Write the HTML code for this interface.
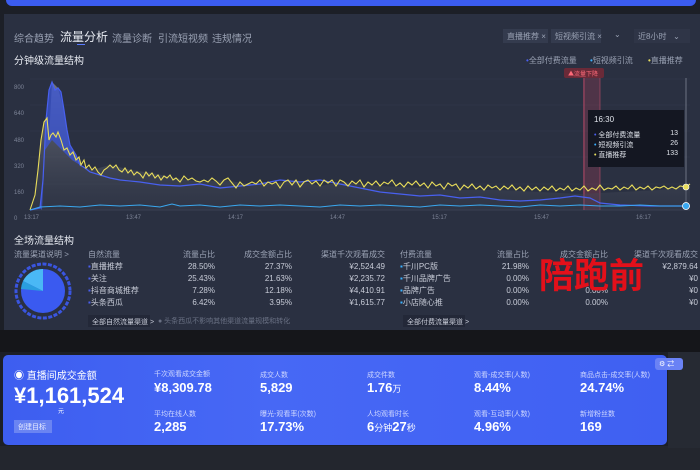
<!DOCTYPE html>
<html><head><meta charset="utf-8"><style>
*{margin:0;padding:0;box-sizing:border-box}
body{width:700px;height:470px;overflow:hidden;background:#1c1f27;font-family:"Liberation Sans","Noto Sans CJK SC",sans-serif;position:relative;color:#c8ccd8}
.a{position:absolute;white-space:nowrap}
.t{font-size:9px;color:#9aa2b4}
.w{color:#e8ebf2}
.r{text-align:right}
</style></head><body>
<div class="a" style="left:6px;top:-10px;width:690px;height:16px;background:#3b5cf0;border-radius:6px"></div>
<div class="a" style="left:4px;top:14px;width:696px;height:316px;background:#2a3041"></div>
<div class="a" style="left:0;top:330px;width:700px;height:22px;background:#15161a"></div>
<div class="a" style="left:0;top:446px;width:700px;height:24px;background:#23262e"></div>
<div class="a" style="left:668px;top:352px;width:32px;height:96px;background:#262a33"></div>

<div class="a t" style="left:14px;top:30px;font-size:10px">综合趋势</div>
<div class="a w" style="left:60px;top:28px;font-size:12px">流量分析</div>
<div class="a" style="left:77px;top:44px;width:8px;height:1px;background:#5b7cff"></div>
<div class="a t" style="left:112px;top:30px;font-size:10px">流量诊断</div>
<div class="a t" style="left:158px;top:30px;font-size:10px">引流短视频</div>
<div class="a t" style="left:212px;top:30px;font-size:10px">违规情况</div>

<div class="a t" style="left:503px;top:29px;height:14px;width:45px;background:#343b4e;font-size:8px;padding:2px 4px">直播推荐 ×</div>
<div class="a t" style="left:551px;top:29px;height:14px;width:50px;background:#343b4e;font-size:8px;padding:2px 4px">短视频引流 ×</div>
<div class="a t" style="left:614px;top:30px;font-size:8px">⌄</div>
<div class="a t" style="left:634px;top:29px;height:14px;width:56px;background:#2f3547;font-size:8px;padding:2px 4px">近8小时 &nbsp; ⌄</div>

<div class="a w" style="left:14px;top:52px;font-size:10px">分钟级流量结构</div>
<div class="a t" style="left:526px;top:55px;font-size:8px"><span style="color:#4a5ff0">•</span>全部付费流量</div>
<div class="a t" style="left:590px;top:55px;font-size:8px"><span style="color:#3ab0ff">•</span>短视频引流</div>
<div class="a t" style="left:648px;top:55px;font-size:8px"><span style="color:#e8e060">•</span>直播推荐</div>

<div class="a t" style="left:14px;top:75px;font-size:6px;line-height:26.3px;color:#7c8396">800<br>640<br>480<br>320<br>160<br>0</div>
<svg class="a" style="left:0;top:0" width="700" height="230">
<defs><linearGradient id="g" x1="0" y1="0" x2="0" y2="1"><stop offset="0" stop-color="#8a8c96" stop-opacity=".75"/><stop offset="1" stop-color="#3a4050" stop-opacity=".3"/></linearGradient></defs>
<g stroke="#343a4c" stroke-width=".5"><line x1="30" y1="79" x2="690" y2="79"/><line x1="30" y1="105" x2="690" y2="105"/><line x1="30" y1="131" x2="690" y2="131"/><line x1="30" y1="157" x2="690" y2="157"/><line x1="30" y1="184" x2="690" y2="184"/><line x1="30" y1="210" x2="690" y2="210" stroke="#4a5064"/></g>
<rect x="583" y="76" width="17" height="134" fill="#c04060" opacity=".25"/>
<line x1="584" y1="76" x2="584" y2="210" stroke="#d05070" stroke-width=".7"/>
<line x1="600" y1="76" x2="600" y2="210" stroke="#d05070" stroke-width=".5"/>
<line x1="686" y1="78" x2="686" y2="210" stroke="#8a90a0" stroke-width=".7"/>
<polygon fill="url(#g)" points="30,210 35,195 38,170 41,140 44,122 47,118 49,140 52,82 58,88 64,110 70,145 76,155 81,165 92,170 110,165 131,170 152,173 176,178 200,182 224,180 248,184 272,184 296,180 320,186 344,182 380,186 420,188 460,190 500,190 540,192 580,194 620,192 660,190 690,186 690,210"/>
<polygon fill="#3b55d8" fill-opacity=".75" points="43,180 46,120 49,90 52,82 55,90 58,88 61,92 64,110 67,130 70,145 73,150 76,155 80,165 72,160 62,150 52,140 45,150 42,210 40,208"/>
<polyline fill="none" stroke="#4860f0" stroke-width="1.2" points="30,210 40,208 43,180 46,120 49,90 52,82 55,90 58,88 61,92 64,110 67,130 70,145 73,150 76,155 80,165 85,168 90,172 100,175 110,178 120,180 140,182 160,185 180,186 200,184 220,188 240,186 260,184 280,180 300,182 320,180 340,184 360,188 380,192 400,194 420,196 440,195 460,198 480,197 500,200 520,201 540,200 560,198 575,196 590,198 600,203 620,205 650,206 690,206"/>
<polyline fill="none" stroke="#e8dc5a" stroke-width="1.1" points="30,210 35,195 38,170 41,140 44,122 47,118 49,140 51,135 53,133 56,137 58,132 61,140 64,150 67,148 70,155 73,152 76,160 79,157 81,165 84,160 86,168 89,165 92,170 95,167 98,172 101,175 104,170 107,168 110,165 113,168 116,165 119,170 122,172 125,168 128,173 131,170 134,175 137,172 140,174 143,178 146,172 149,176 152,173 155,178 158,175 161,180 164,176 167,178 170,175 173,180 176,178 180,182 184,176 188,180 192,178 196,181 200,182 204,180 208,182 212,178 216,181 220,185 224,180 228,178 232,183 236,188 240,182 244,186 248,184 252,182 256,184 260,180 264,186 268,182 272,184 276,182 280,188 284,182 288,180 292,185 296,180 300,187 304,182 308,180 312,184 316,181 320,186 324,180 328,183 332,180 336,186 340,180 344,182 348,186 352,181 356,184 360,180 364,187 368,182 372,185 376,181 380,186 384,182 388,184 392,180 396,186 400,183 404,187 408,182 412,185 416,181 420,186 424,183 428,188 432,182 436,186 440,184 444,189 448,183 452,186 456,184 460,190 464,185 468,188 472,184 476,189 480,186 484,190 488,185 492,188 496,186 500,190 504,186 508,189 512,185 516,190 520,187 524,191 528,186 532,190 536,187 540,191 544,187 548,190 552,186 556,191 560,188 564,190 568,186 572,191 576,188 580,190 584,186 588,191 592,188 596,190 600,185 604,190 608,188 612,189 616,186 620,190 624,187 628,189 632,185 636,190 640,187 644,189 648,186 652,190 656,187 660,188 664,186 668,189 672,187 676,189 680,186 686,187 690,184"/>
<polyline fill="none" stroke="#3aa8f0" stroke-width="1" points="30,210 40,207 60,206 80,207 100,205 120,206 140,205 160,207 172,204 180,206 200,205 220,207 240,205 260,206 280,205 300,206 320,207 340,205 360,206 380,205 400,206 420,207 440,205 460,206 480,205 500,206 520,207 540,205 560,206 580,205 600,206 620,206 640,205 660,206 686,206 690,206"/>
<circle cx="686" cy="187" r="3" fill="#e8dc5a" stroke="#fff" stroke-width=".6"/>
<circle cx="686" cy="206" r="3.5" fill="#3aa8f0" stroke="#fff" stroke-width=".8"/>
<g fill="#7c8396" font-size="6" font-family="Liberation Sans"><text x="24" y="219">13:17</text><text x="126" y="219">13:47</text><text x="228" y="219">14:17</text><text x="330" y="219">14:47</text><text x="432" y="219">15:17</text><text x="534" y="219">15:47</text><text x="636" y="219">16:17</text></g>
<rect x="564" y="68" width="40" height="10" rx="2" fill="#6a2a38"/>
<text x="568" y="76" font-size="6" fill="#ff6b7a" font-family="Noto Sans CJK SC">▲流量下降</text>
</svg>
<div class="a" style="left:588px;top:110px;width:96px;height:57px;background:#141722;font-size:7px;color:#dfe3ea;padding:5px 6px">
<div style="font-size:8px;margin-bottom:6px">16:30</div>
<div><span style="color:#4a5ff0">•</span> 全部付费流量<span style="float:right">13</span></div>
<div><span style="color:#3ab0ff">•</span> 短视频引流<span style="float:right">26</span></div>
<div><span style="color:#e8e060">•</span> 直播推荐<span style="float:right">133</span></div>
</div>

<div class="a w" style="left:14px;top:232px;font-size:10px">全场流量结构</div>
<div class="a t" style="left:14px;top:249px;font-size:8px">流量渠道说明 &gt;</div>
<svg class="a" style="left:14px;top:262px" width="58" height="58">
<circle cx="29" cy="29" r="27" fill="none" stroke="#3a55e0" stroke-width="3" stroke-dasharray="4 1.5"/>
<circle cx="29" cy="29" r="22" fill="#3a5af0"/>
<path d="M29 29 L29 7 A22 22 0 0 0 9 19 Z" fill="#4ab8f5"/>
<path d="M29 29 L9 19 A22 22 0 0 0 7 27 Z" fill="#2a9ee0"/>
</svg>
<div class="a" style="left:88px;top:249px;width:300px;font-size:8px;line-height:12.3px">
<div class="t" style="font-size:8px;position:relative;height:12px">自然流量<span class="a r" style="right:173px">流量占比</span><span class="a r" style="right:96px">成交金额占比</span><span class="a r" style="right:3px">渠道千次观看成交</span></div>
<div style="position:relative;height:12px"><span style="color:#4a5ff0">▪</span>直播推荐<span class="a r" style="right:173px">28.50%</span><span class="a r" style="right:96px">27.37%</span><span class="a r" style="right:3px">¥2,524.49</span></div>
<div style="position:relative;height:12px"><span style="color:#4a5ff0">▪</span>关注<span class="a r" style="right:173px">25.43%</span><span class="a r" style="right:96px">21.63%</span><span class="a r" style="right:3px">¥2,235.72</span></div>
<div style="position:relative;height:12px"><span style="color:#4a5ff0">▪</span>抖音商城推荐<span class="a r" style="right:173px">7.28%</span><span class="a r" style="right:96px">12.18%</span><span class="a r" style="right:3px">¥4,410.91</span></div>
<div style="position:relative;height:12px"><span style="color:#4a5ff0">▪</span>头条西瓜<span class="a r" style="right:173px">6.42%</span><span class="a r" style="right:96px">3.95%</span><span class="a r" style="right:3px">¥1,615.77</span></div>
</div>
<div class="a" style="left:88px;top:315px;width:62px;height:12px;background:#232838;font-size:7px;padding:2px 4px;color:#c8ccd8">全部自然流量渠道 &gt;</div>
<div class="a t" style="left:158px;top:316px;font-size:7px;color:#6a7184">● 头条西瓜不影响其他渠道流量规模和转化</div>
<div class="a" style="left:400px;top:249px;width:298px;font-size:8px;line-height:12.3px">
<div class="t" style="font-size:8px;position:relative;height:12px">付费流量<span class="a r" style="right:169px">流量占比</span><span class="a r" style="right:90px">成交金额占比</span><span class="a r" style="right:0">渠道千次观看成交</span></div>
<div style="position:relative;height:12px"><span style="color:#3ab0ff">▪</span>千川PC版<span class="a r" style="right:169px">21.98%</span><span class="a r" style="right:0">¥2,879.64</span></div>
<div style="position:relative;height:12px"><span style="color:#3ab0ff">▪</span>千川品牌广告<span class="a r" style="right:169px">0.00%</span><span class="a r" style="right:0">¥0</span></div>
<div style="position:relative;height:12px"><span style="color:#3ab0ff">▪</span>品牌广告<span class="a r" style="right:169px">0.00%</span><span class="a r" style="right:90px">0.00%</span><span class="a r" style="right:0">¥0</span></div>
<div style="position:relative;height:12px"><span style="color:#3ab0ff">▪</span>小店随心推<span class="a r" style="right:169px">0.00%</span><span class="a r" style="right:90px">0.00%</span><span class="a r" style="right:0">¥0</span></div>
</div>
<div class="a" style="left:403px;top:315px;width:62px;height:12px;background:#232838;font-size:7px;padding:2px 4px;color:#c8ccd8">全部付费流量渠道 &gt;</div>
<div class="a" style="left:539px;top:253px;font-size:35px;font-weight:bold;color:#e3101a;font-family:'Noto Sans CJK SC',sans-serif;line-height:42px">陪跑前</div>

<div class="a" style="left:3px;top:355px;width:664px;height:90px;border-radius:5px;background:linear-gradient(90deg,#3d5ef0,#4768f5 40%,#3f60f2)"></div>
<div class="a" style="left:655px;top:358px;width:28px;height:12px;border-radius:3px;background:#6a82f5;font-size:7px;color:#fff;padding:1px 4px">⚙ ⇄</div>
<div class="a" style="left:14px;top:367px;font-size:10px;color:#fff">◉ 直播间成交金额</div>
<div class="a" style="left:14px;top:383px;font-size:22px;font-weight:bold;color:#fff">¥1,161,524</div>
<div class="a" style="left:58px;top:406px;font-size:6px;color:#fff">元</div>
<div class="a" style="left:14px;top:420px;width:38px;height:13px;background:#6a84f2;font-size:7px;color:#e8ecff;padding:2px 4px">创建目标</div>
<div class="a" style="left:154px;top:370px;font-size:7px;color:#cdd6ff;line-height:9px">千次观看成交金额</div>
<div class="a" style="left:154px;top:380px;font-size:13px;font-weight:bold;color:#fff">¥8,309.78</div>
<div class="a" style="left:154px;top:409px;font-size:7px;color:#cdd6ff">平均在线人数</div>
<div class="a" style="left:154px;top:419px;font-size:13px;font-weight:bold;color:#fff">2,285</div>
<div class="a" style="left:260px;top:370px;font-size:7px;color:#cdd6ff">成交人数</div>
<div class="a" style="left:260px;top:380px;font-size:13px;font-weight:bold;color:#fff">5,829</div>
<div class="a" style="left:260px;top:409px;font-size:7px;color:#cdd6ff">曝光-观看率(次数)</div>
<div class="a" style="left:260px;top:419px;font-size:13px;font-weight:bold;color:#fff">17.73%</div>
<div class="a" style="left:367px;top:370px;font-size:7px;color:#cdd6ff">成交件数</div>
<div class="a" style="left:367px;top:380px;font-size:13px;font-weight:bold;color:#fff">1.76<span style="font-size:9px;font-weight:normal">万</span></div>
<div class="a" style="left:367px;top:409px;font-size:7px;color:#cdd6ff">人均观看时长</div>
<div class="a" style="left:367px;top:419px;font-size:13px;font-weight:bold;color:#fff">6<span style="font-size:9px;font-weight:normal">分钟</span>27<span style="font-size:9px;font-weight:normal">秒</span></div>
<div class="a" style="left:474px;top:370px;font-size:7px;color:#cdd6ff">观看-成交率(人数)</div>
<div class="a" style="left:474px;top:380px;font-size:13px;font-weight:bold;color:#fff">8.44%</div>
<div class="a" style="left:474px;top:409px;font-size:7px;color:#cdd6ff">观看-互动率(人数)</div>
<div class="a" style="left:474px;top:419px;font-size:13px;font-weight:bold;color:#fff">4.96%</div>
<div class="a" style="left:580px;top:370px;font-size:7px;color:#cdd6ff">商品点击-成交率(人数)</div>
<div class="a" style="left:580px;top:380px;font-size:13px;font-weight:bold;color:#fff">24.74%</div>
<div class="a" style="left:580px;top:409px;font-size:7px;color:#cdd6ff">新增粉丝数</div>
<div class="a" style="left:580px;top:419px;font-size:13px;font-weight:bold;color:#fff">169</div>
</body></html>
